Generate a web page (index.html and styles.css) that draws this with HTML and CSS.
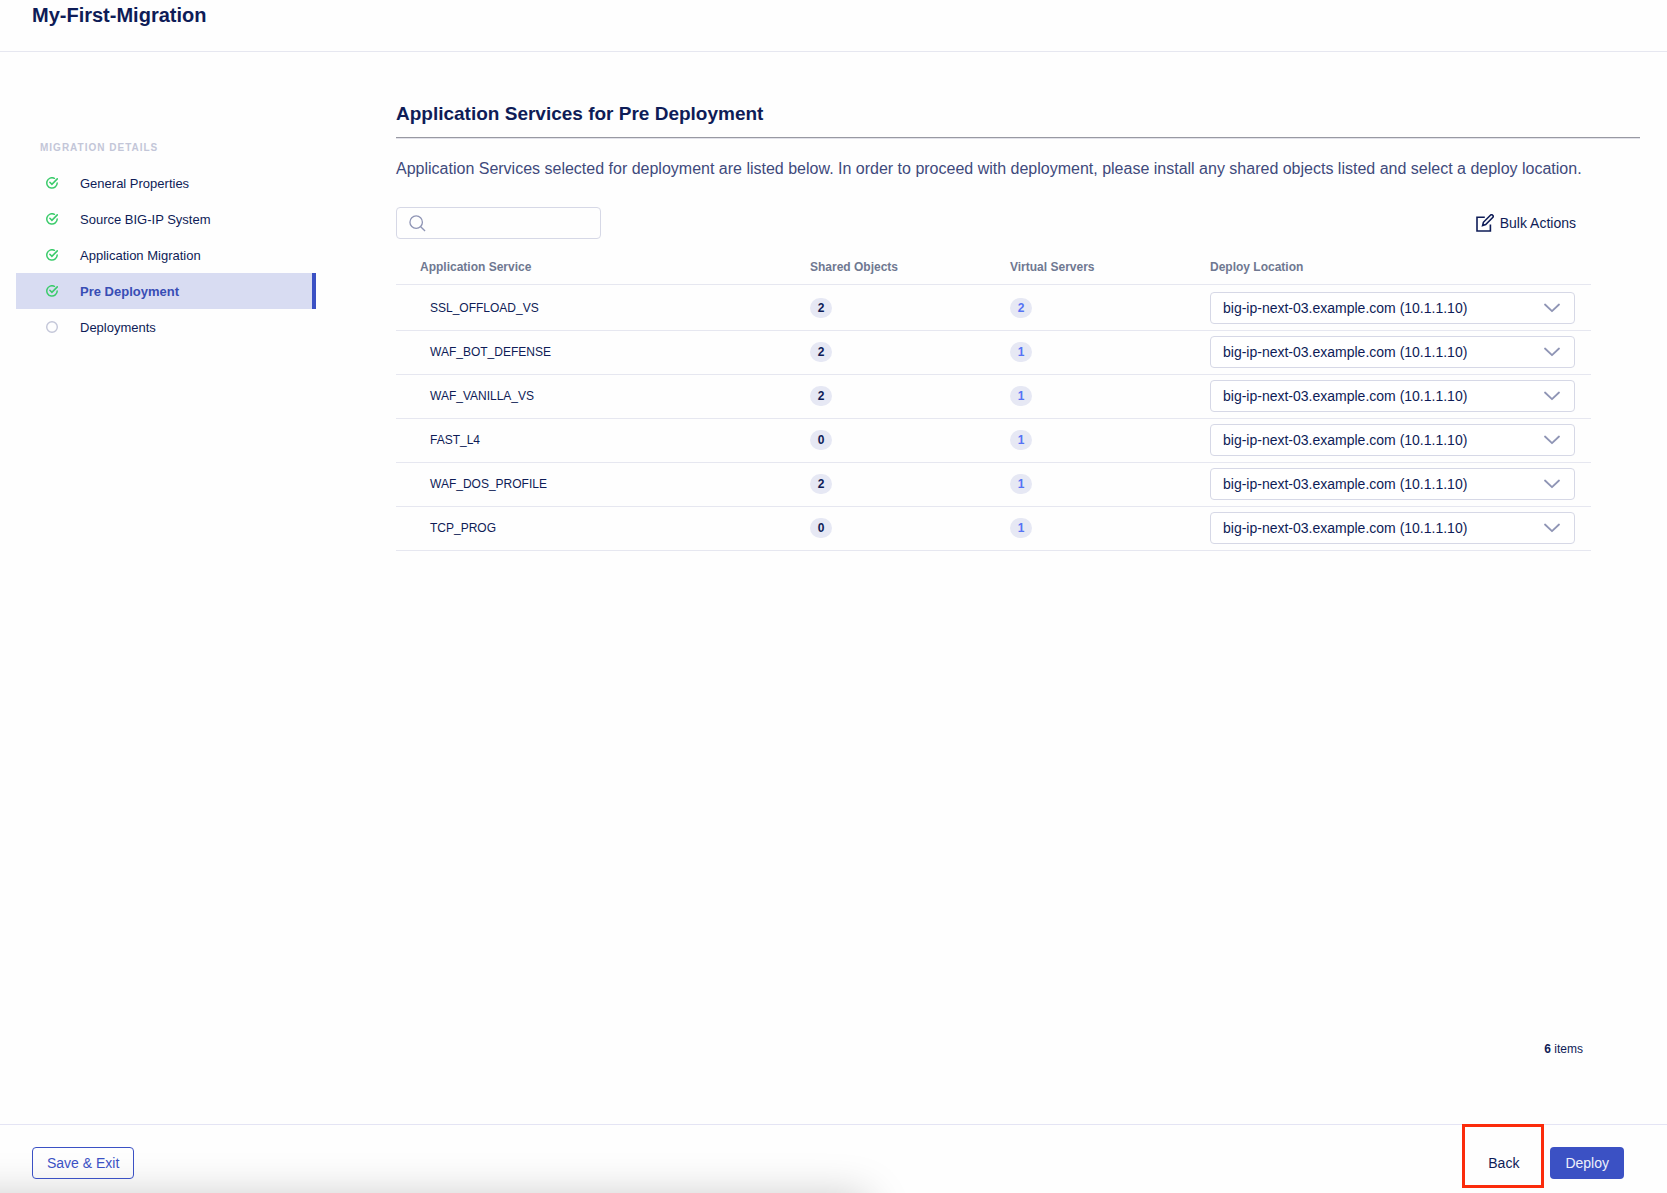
FILE: index.html
```html
<!DOCTYPE html>
<html lang="en">
<head>
<meta charset="utf-8">
<title>My-First-Migration</title>
<link rel="stylesheet" href="styles.css">
</head>
<body>
<svg class="sprite" aria-hidden="true">
  <symbol id="check" viewBox="0 0 12 12"><path d="M8.4 1.3A5.2 5.2 0 1 0 11.2 6" fill="none" stroke="currentColor" stroke-width="1.5" stroke-linecap="round"/><path d="M3.9 5.3 5.9 7.3 11.3 1.9" fill="none" stroke="currentColor" stroke-width="1.6" stroke-linecap="round"/></symbol>
  <symbol id="ring" viewBox="0 0 12 12"><circle cx="6" cy="6" r="5.3" fill="none" stroke="currentColor" stroke-width="1.4"/></symbol>
  <symbol id="chevron" viewBox="0 0 16 10"><path d="M1 1.5 8 8.2 15 1.5" fill="none" stroke="currentColor" stroke-width="1.8" stroke-linecap="round" stroke-linejoin="round"/></symbol>
</svg>

<header class="topbar"><h1 class="topbar-title">My-First-Migration</h1></header>

<div class="layout">
  <nav class="steps" aria-labelledby="steps-title">
    <h2 class="steps-title" id="steps-title">MIGRATION DETAILS</h2>
    <ul class="steps-list">
      <li><a class="step" href="#general"><svg class="step-icon done"><use href="#check"/></svg>General Properties</a></li>
      <li><a class="step" href="#source"><svg class="step-icon done"><use href="#check"/></svg>Source BIG-IP System</a></li>
      <li><a class="step" href="#application"><svg class="step-icon done"><use href="#check"/></svg>Application Migration</a></li>
      <li><a class="step current" href="#pre" aria-current="step"><svg class="step-icon done"><use href="#check"/></svg>Pre Deployment</a></li>
      <li><a class="step" href="#deployments"><svg class="step-icon"><use href="#ring"/></svg>Deployments</a></li>
    </ul>
  </nav>

  <main class="content">
    <h2 class="content-title">Application Services for Pre Deployment</h2>
    <hr class="rule">
    <p class="intro">Application Services selected for deployment are listed below. In order to proceed with deployment, please install any shared objects listed and select a deploy location.</p>

    <div class="panel">
      <div class="toolbar">
        <label class="search">
          <svg class="search-icon" viewBox="0 0 18 18" aria-hidden="true"><circle cx="7.6" cy="7.6" r="6.6"/><path d="m12.4 12.4 4.6 4.6"/></svg>
          <input class="search-input" type="text" aria-label="Search application services">
        </label>
        <button class="bulk" type="button">
          <svg class="bulk-icon" viewBox="0 0 18 18" aria-hidden="true"><path d="M8.8 3.3H1V17h13.4v-6.6"/><path d="m6.6 11.6.8-3.3 7-7a1.5 1.5 0 0 1 2.3 2.2l-7 7.1z"/></svg>
          Bulk Actions
        </button>
      </div>

      <table class="services">
        <colgroup><col><col class="col-count"><col class="col-count"><col class="col-location"></colgroup>
        <thead>
          <tr><th scope="col">Application Service</th><th scope="col">Shared Objects</th><th scope="col">Virtual Servers</th><th scope="col">Deploy Location</th></tr>
        </thead>
        <tbody>
          <tr><td>SSL_OFFLOAD_VS</td><td><span class="badge">2</span></td><td><a class="badge link" href="#vs1">2</a></td><td><div class="picker"><select class="picker-select" aria-label="Deploy location for SSL_OFFLOAD_VS"><option>big-ip-next-03.example.com (10.1.1.10)</option></select><svg class="picker-icon"><use href="#chevron"/></svg></div></td></tr>
          <tr><td>WAF_BOT_DEFENSE</td><td><span class="badge">2</span></td><td><a class="badge link" href="#vs2">1</a></td><td><div class="picker"><select class="picker-select" aria-label="Deploy location for WAF_BOT_DEFENSE"><option>big-ip-next-03.example.com (10.1.1.10)</option></select><svg class="picker-icon"><use href="#chevron"/></svg></div></td></tr>
          <tr><td>WAF_VANILLA_VS</td><td><span class="badge">2</span></td><td><a class="badge link" href="#vs3">1</a></td><td><div class="picker"><select class="picker-select" aria-label="Deploy location for WAF_VANILLA_VS"><option>big-ip-next-03.example.com (10.1.1.10)</option></select><svg class="picker-icon"><use href="#chevron"/></svg></div></td></tr>
          <tr><td>FAST_L4</td><td><span class="badge">0</span></td><td><a class="badge link" href="#vs4">1</a></td><td><div class="picker"><select class="picker-select" aria-label="Deploy location for FAST_L4"><option>big-ip-next-03.example.com (10.1.1.10)</option></select><svg class="picker-icon"><use href="#chevron"/></svg></div></td></tr>
          <tr><td>WAF_DOS_PROFILE</td><td><span class="badge">2</span></td><td><a class="badge link" href="#vs5">1</a></td><td><div class="picker"><select class="picker-select" aria-label="Deploy location for WAF_DOS_PROFILE"><option>big-ip-next-03.example.com (10.1.1.10)</option></select><svg class="picker-icon"><use href="#chevron"/></svg></div></td></tr>
          <tr><td>TCP_PROG</td><td><span class="badge">0</span></td><td><a class="badge link" href="#vs6">1</a></td><td><div class="picker"><select class="picker-select" aria-label="Deploy location for TCP_PROG"><option>big-ip-next-03.example.com (10.1.1.10)</option></select><svg class="picker-icon"><use href="#chevron"/></svg></div></td></tr>
        </tbody>
      </table>

      <p class="count"><strong>6</strong> items</p>
    </div>
  </main>
</div>

<footer class="actions">
  <div class="shade" aria-hidden="true"></div>
  <button class="btn outline" type="button">Save &amp; Exit</button>
  <div class="actions-end">
    <div class="marked"><button class="btn plain" type="button">Back</button></div>
    <button class="btn primary" type="button">Deploy</button>
  </div>
</footer>
</body>
</html>
```
FILE: styles.css
```css
* { box-sizing: border-box; }

body {
  margin: 0;
  min-height: 100vh;
  display: flex;
  flex-direction: column;
  background: #fefefe;
  color: #0e1c57;
  font-family: "Liberation Sans", Arial, sans-serif;
  font-size: 14px;
}

h1, h2, p, ul { margin: 0; }
button, input, select { font: inherit; color: inherit; }
a { color: inherit; text-decoration: none; }

.sprite { position: absolute; width: 0; height: 0; }

.topbar {
  padding: 3px 32px 24px;
  border-bottom: 1px solid #e6e7f0;
}
.topbar-title { font-size: 20px; line-height: 24px; }

.layout { flex: 1; display: flex; }

/* Step navigation */
.steps { flex: none; width: 300px; margin: 88px 80px 0 16px; }
.steps-title {
  padding: 0 24px;
  margin-bottom: 9px;
  font-size: 10px;
  line-height: 16px;
  letter-spacing: 1px;
  color: #c3c6d8;
}
.steps-list { padding: 0; list-style: none; }
.step {
  display: flex;
  align-items: center;
  gap: 22px;
  height: 36px;
  padding-left: 30px;
  font-size: 13px;
}
.step.current {
  background: #d8dcf2;
  border-right: 4px solid #3b51c4;
  color: #384db5;
  font-weight: bold;
}
.step-icon { width: 12px; height: 12px; color: #c3c6d8; }
.step-icon.done { color: #3bcb6b; }

/* Main column */
.content {
  flex: 1;
  min-width: 0;
  display: flex;
  flex-direction: column;
  padding: 50px 27px 0 0;
}
.content-title { font-size: 19px; line-height: 24px; }
.rule {
  width: 100%;
  height: 2px;
  margin: 11px 0 18px;
  border: 0;
  border-top: 1px solid #9899a2;
  background: #e2e2ea;
}
.intro { font-size: 16px; line-height: 24px; color: #3f4a7c; }
.panel {
  flex: 1;
  display: flex;
  flex-direction: column;
  margin: 26px 49px 0 0;
}

.toolbar { display: flex; justify-content: space-between; align-items: center; }
.search {
  display: flex;
  align-items: center;
  gap: 8px;
  width: 205px;
  height: 32px;
  padding: 0 12px;
  border: 1px solid #d6d8e6;
  border-radius: 4px;
}
.search-icon { flex: none; width: 17px; height: 17px; fill: none; stroke: #8f95b5; stroke-width: 1.4; }
.search-input { flex: 1; min-width: 0; padding: 0; border: 0; outline: 0; background: none; }
.bulk {
  display: flex;
  align-items: center;
  gap: 6px;
  padding: 0;
  margin-right: 15px;
  border: 0;
  background: none;
}
.bulk-icon { width: 18px; height: 18px; fill: none; stroke: currentColor; stroke-width: 1.6; }

/* Services table */
.services { width: 100%; table-layout: fixed; border-collapse: separate; border-spacing: 0; }
.col-count { width: 200px; }
.col-location { width: 381px; }
.services th {
  height: 46px;
  padding: 10px 0 0;
  border-bottom: 1px solid #e6e7f0;
  font-size: 12px;
  text-align: left;
  color: #6f7891;
}
.services th:first-child { padding-left: 24px; }
.services td { height: 44px; padding: 5px 0 6px; border-bottom: 1px solid #e6e7f0; font-size: 12px; }
.services td:first-child { padding-left: 34px; }
.services td:last-child { padding-right: 16px; }
.services tbody tr:first-child td { height: 46px; padding-top: 7px; }

.badge {
  display: block;
  width: 22px;
  border-radius: 10px;
  background: #e6e8f4;
  font-weight: bold;
  line-height: 20px;
  text-align: center;
}
.badge.link { color: #5673f5; }

.picker { display: grid; align-items: center; }
.picker-select, .picker-icon { grid-area: 1 / 1; }
.picker-select {
  appearance: none;
  width: 100%;
  height: 32px;
  padding: 0 40px 0 12px;
  border: 1px solid #d6d8e6;
  border-radius: 4px;
  background: #fff;
  font-size: 14px;
}
.picker-icon {
  justify-self: end;
  width: 16px;
  height: 10px;
  margin-right: 15px;
  color: #8f95b5;
  pointer-events: none;
}

.count { margin: auto 8px 67px auto; font-size: 12px; line-height: 16px; }

/* Footer */
.actions {
  position: relative;
  display: flex;
  justify-content: space-between;
  align-items: flex-start;
  padding-left: 32px;
  padding-right: 43px;
  border-top: 1px solid #e4e4f4;
}
.btn {
  height: 32px;
  margin: 22px 0 14px;
  padding: 0 14px;
  border: 1px solid transparent;
  border-radius: 4px;
  background: none;
  position: relative;
}
.outline { border-color: #3b51c4; color: #3b51c4; }
.primary { background: #3b51c4; color: #eef0fb; }
.actions-end { display: flex; gap: 16px; }
.marked { position: relative; }
.marked::after {
  content: "";
  position: absolute;
  inset: -1px -10px 5px -11px;
  border: 3px solid #fb2b0b;
  pointer-events: none;
}
.shade { position: absolute; inset: 0; overflow: hidden; }
.shade::after {
  content: "";
  position: absolute;
  top: 100%;
  left: -80px;
  width: calc(52% + 80px);
  height: 80px;
  box-shadow: 0 4px 44px rgba(0, 0, 0, 0.22);
}
```
